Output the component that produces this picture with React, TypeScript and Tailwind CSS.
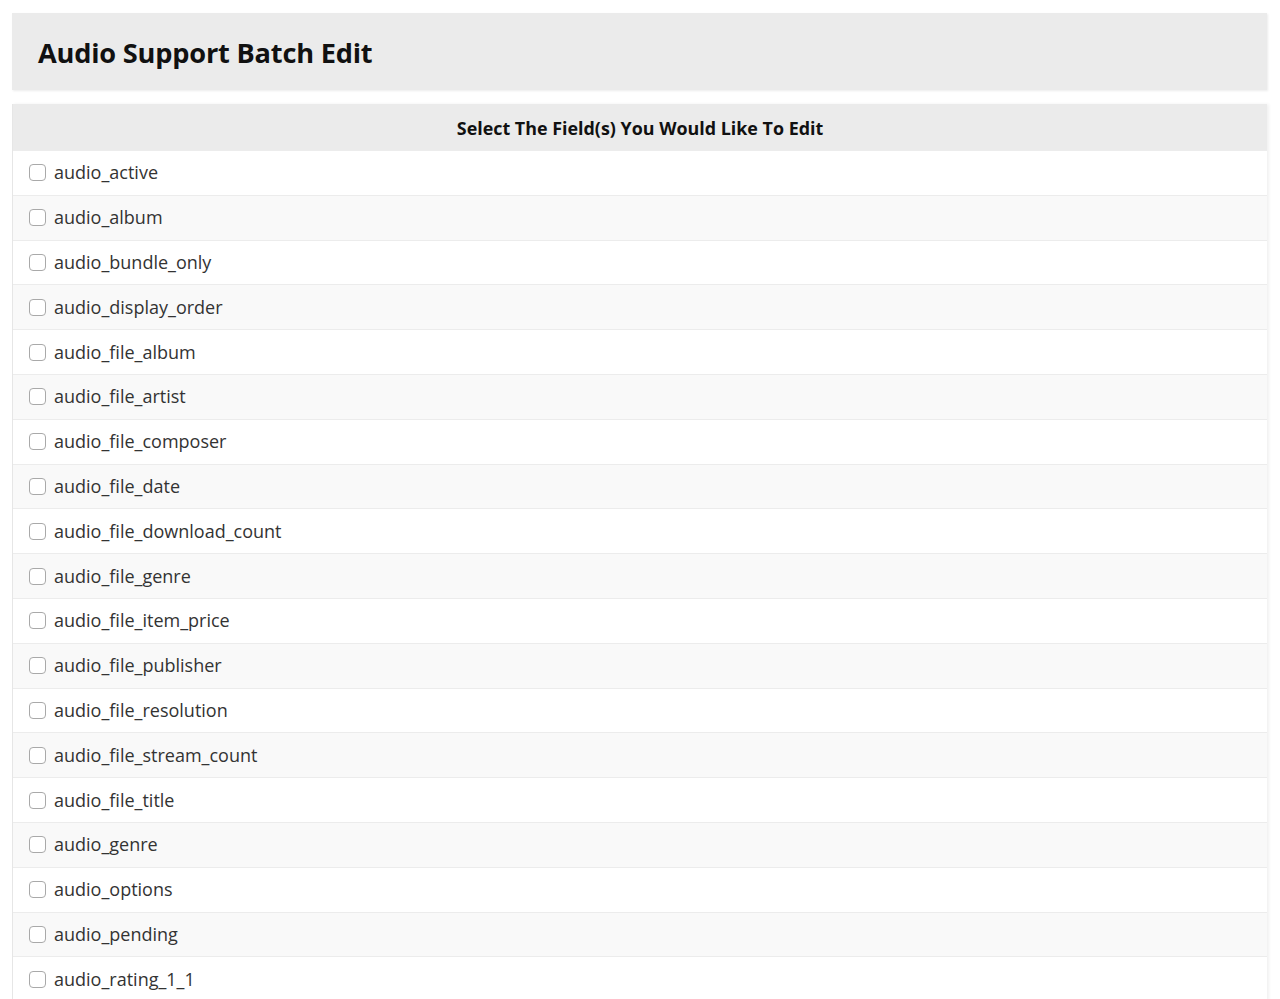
const FIELDS = [
  'audio_active',
  'audio_album',
  'audio_bundle_only',
  'audio_display_order',
  'audio_file_album',
  'audio_file_artist',
  'audio_file_composer',
  'audio_file_date',
  'audio_file_download_count',
  'audio_file_genre',
  'audio_file_item_price',
  'audio_file_publisher',
  'audio_file_resolution',
  'audio_file_stream_count',
  'audio_file_title',
  'audio_genre',
  'audio_options',
  'audio_pending',
  'audio_rating_1_1',
]

export default function App() {
  return (
    <div className="min-h-screen bg-white pt-[13px] font-['Open_Sans',sans-serif] text-[#222]">
      <div className="mx-[12px] mr-[13px] flex h-[77px] items-center bg-[#ebebeb] px-[26px] pt-[3px] shadow-[1px_1px_2px_rgba(0,0,0,0.08)]">
        <h1 className="text-[27.2px] font-bold tracking-[-0.2px] text-[#111]">Audio Support Batch Edit</h1>
      </div>
      <div className="mx-[12px] mr-[13px] mt-[14px] border-l border-[#e6e6e6] shadow-[2px_0_3px_rgba(0,0,0,0.06)]">
        <div className="flex h-[46px] items-center justify-center bg-[#ebebeb] pt-[2px] text-[17.9px] font-bold text-[#111]">
          Select The Field(s) You Would Like To Edit
        </div>
        {FIELDS.map((f, i) => (
          <label
            key={f}
            className={`flex h-[44.8px] items-center gap-[8px] border-t border-[#ececec] pl-[16px] first:border-t-0 ${
              i % 2 === 0 ? 'bg-white' : 'bg-[#f9f9f9]'
            }`}
          >
            <span className="block h-[17px] w-[17px] rounded-[4px] border border-[#a9a9a9] bg-white" />
            <span className="text-[18px] text-[#333]">{f}</span>
          </label>
        ))}
      </div>
    </div>
  )
}
